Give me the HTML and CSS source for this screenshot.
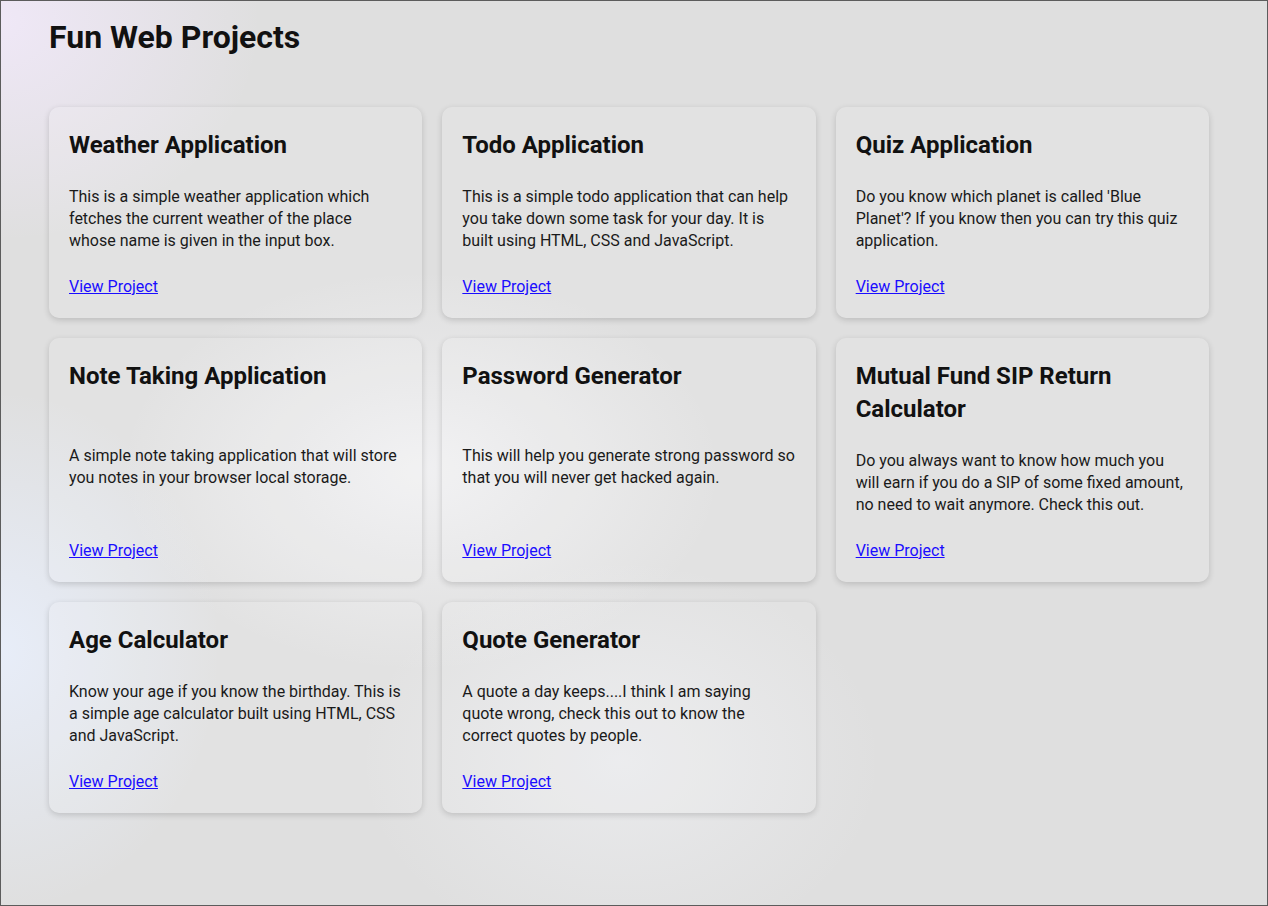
FILE: index.html
```html
<!DOCTYPE html>
<html lang="en">
<head>
<meta charset="utf-8">
<title>Fun Web Projects</title>
<link rel="stylesheet" href="styles.css">
</head>
<body>
<div class="page">
  <h1 class="page-title">Fun Web Projects</h1>
  <div class="grid">
    <div class="card">
      <h2 class="card-title">Weather Application</h2>
      <p class="card-text">This is a simple weather application which fetches the current weather of the place whose name is given in the input box.</p>
      <a class="card-link" href="#">View Project</a>
    </div>
    <div class="card">
      <h2 class="card-title">Todo Application</h2>
      <p class="card-text">This is a simple todo application that can help you take down some task for your day. It is built using HTML, CSS and JavaScript.</p>
      <a class="card-link" href="#">View Project</a>
    </div>
    <div class="card">
      <h2 class="card-title">Quiz Application</h2>
      <p class="card-text">Do you know which planet is called 'Blue Planet'? If you know then you can try this quiz application.</p>
      <a class="card-link" href="#">View Project</a>
    </div>
    <div class="card">
      <h2 class="card-title">Note Taking Application</h2>
      <p class="card-text">A simple note taking application that will store you notes in your browser local storage.</p>
      <a class="card-link" href="#">View Project</a>
    </div>
    <div class="card">
      <h2 class="card-title">Password Generator</h2>
      <p class="card-text">This will help you generate strong password so that you will never get hacked again.</p>
      <a class="card-link" href="#">View Project</a>
    </div>
    <div class="card">
      <h2 class="card-title">Mutual Fund SIP Return Calculator</h2>
      <p class="card-text">Do you always want to know how much you will earn if you do a SIP of some fixed amount, no need to wait anymore. Check this out.</p>
      <a class="card-link" href="#">View Project</a>
    </div>
    <div class="card">
      <h2 class="card-title">Age Calculator</h2>
      <p class="card-text">Know your age if you know the birthday. This is a simple age calculator built using HTML, CSS and JavaScript.</p>
      <a class="card-link" href="#">View Project</a>
    </div>
    <div class="card">
      <h2 class="card-title">Quote Generator</h2>
      <p class="card-text">A quote a day keeps....I think I am saying quote wrong, check this out to know the correct quotes by people.</p>
      <a class="card-link" href="#">View Project</a>
    </div>
  </div>
</div>
</body>
</html>
```
FILE: styles.css
```css
* { box-sizing: border-box; }
html, body { margin: 0; padding: 0; }
body {
  font-family: Roboto, "Liberation Sans", sans-serif;
  color: #111;
  background: #dfdfdf;
}
.page {
  height: 906px;
  border: 1px solid #5c5c5c;
  padding: 12px 48px 0 48px;
  background:
    radial-gradient(ellipse 260px 220px at 0px 20px, rgba(240, 232, 248, 0.95), rgba(240, 232, 248, 0) 100%),
    radial-gradient(ellipse 220px 260px at 0px 650px, rgba(232, 238, 250, 0.95), rgba(232, 238, 250, 0) 100%),
    radial-gradient(ellipse 300px 200px at 420px 470px, rgba(244, 244, 246, 0.8), rgba(244, 244, 246, 0) 100%),
    radial-gradient(ellipse 260px 200px at 620px 760px, rgba(238, 239, 242, 0.7), rgba(238, 239, 242, 0) 100%),
    #dfdfdf;
}
.page-title {
  margin: 0 0 46px 0;
  font-size: 32px;
  line-height: 48px;
  font-weight: 700;
  color: #111;
}
.grid {
  width: 1160px;
  display: grid;
  grid-template-columns: repeat(3, 1fr);
  gap: 20px;
}
.card {
  display: flex;
  flex-direction: column;
  justify-content: space-between;
  gap: 24px;
  padding: 22px 20px 20px 20px;
  border-radius: 10px;
  background: rgba(255, 255, 255, 0.12);
  box-shadow: 0 2px 6px rgba(0, 0, 0, 0.16);
}
.card-title {
  margin: 0;
  font-size: 24px;
  line-height: 33px;
  font-weight: 700;
  color: #111;
}
.card-text {
  margin: 0 0.5px 0 0;
  font-size: 16px;
  line-height: 22px;
  color: #1a1a1a;
}
.card-link {
  align-self: flex-start;
  font-size: 16px;
  line-height: 22px;
  color: #1a0dff;
  text-decoration: underline;
}
```
